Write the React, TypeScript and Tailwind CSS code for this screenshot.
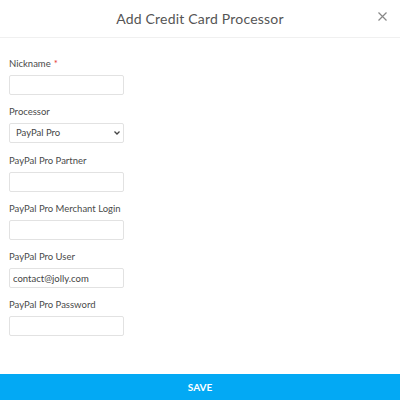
import React from "react";

const fields = [
  { label: "Nickname", required: true, type: "input", value: "" },
  { label: "Processor", type: "select", value: "PayPal Pro" },
  { label: "PayPal Pro Partner", type: "input", value: "" },
  { label: "PayPal Pro Merchant Login", type: "input", value: "" },
  { label: "PayPal Pro User", type: "input", value: "contact@jolly.com" },
  { label: "PayPal Pro Password", type: "input", value: "" },
];

export default function App() {
  return (
    <div
      className="w-[400px] h-[400px] bg-white flex flex-col overflow-hidden"
      style={{ fontFamily: "Lato, 'Noto Sans', sans-serif" }}
    >
      <div className="h-[38px] border-b border-[#f0f0f0] flex items-center justify-center relative shrink-0">
        <div className="text-[14px] text-[#555] tracking-[0.2px] mt-[-1px]">Add Credit Card Processor</div>
        <svg
          className="absolute right-[13px] top-[12px]"
          width="9"
          height="9"
          viewBox="0 0 9 9"
        >
          <path d="M0.5 0.5 L8.5 8.5 M8.5 0.5 L0.5 8.5" stroke="#888" strokeWidth="1.2" />
        </svg>
      </div>
      <div className="flex-1 pl-[9px] pt-[19px] flex flex-col gap-[10.25px]">
        {fields.map((f) => (
          <div key={f.label} className="flex flex-col">
            <div className="text-[9.5px] leading-[14px] text-[#4a4a4a] mb-[4px]">
              {f.label}
              {f.required && <span className="text-[#e53935] ml-[3px]">*</span>}
            </div>
            {f.type === "select" ? (
              <div className="relative w-[115px] h-[20px]">
                <select
                  className="block appearance-none w-full h-[20px] border border-[#e2e2e2] rounded-[2px] bg-white text-[9.5px] text-[#444] pl-[6px] outline-none"
                  style={{ fontFamily: "Lato, sans-serif" }}
                  defaultValue={f.value}
                >
                  <option>PayPal Pro</option>
                </select>
                <svg
                  className="absolute right-[4px] top-[8px] pointer-events-none"
                  width="6"
                  height="4"
                  viewBox="0 0 6 4"
                >
                  <path d="M0.5 0.5 L3 3 L5.5 0.5" stroke="#444" strokeWidth="1.3" fill="none" />
                </svg>
              </div>
            ) : (
              <input
                className="block w-[115px] h-[20px] border border-[#e2e2e2] rounded-[2px] bg-white text-[9.5px] text-[#444] pl-[3px] outline-none"
                style={{ fontFamily: "Lato, sans-serif" }}
                defaultValue={f.value}
              />
            )}
          </div>
        ))}
      </div>
      <button className="h-[26px] w-full bg-[#03a9f4] text-white text-[10px] font-bold shrink-0">
        SAVE
      </button>
    </div>
  );
}
